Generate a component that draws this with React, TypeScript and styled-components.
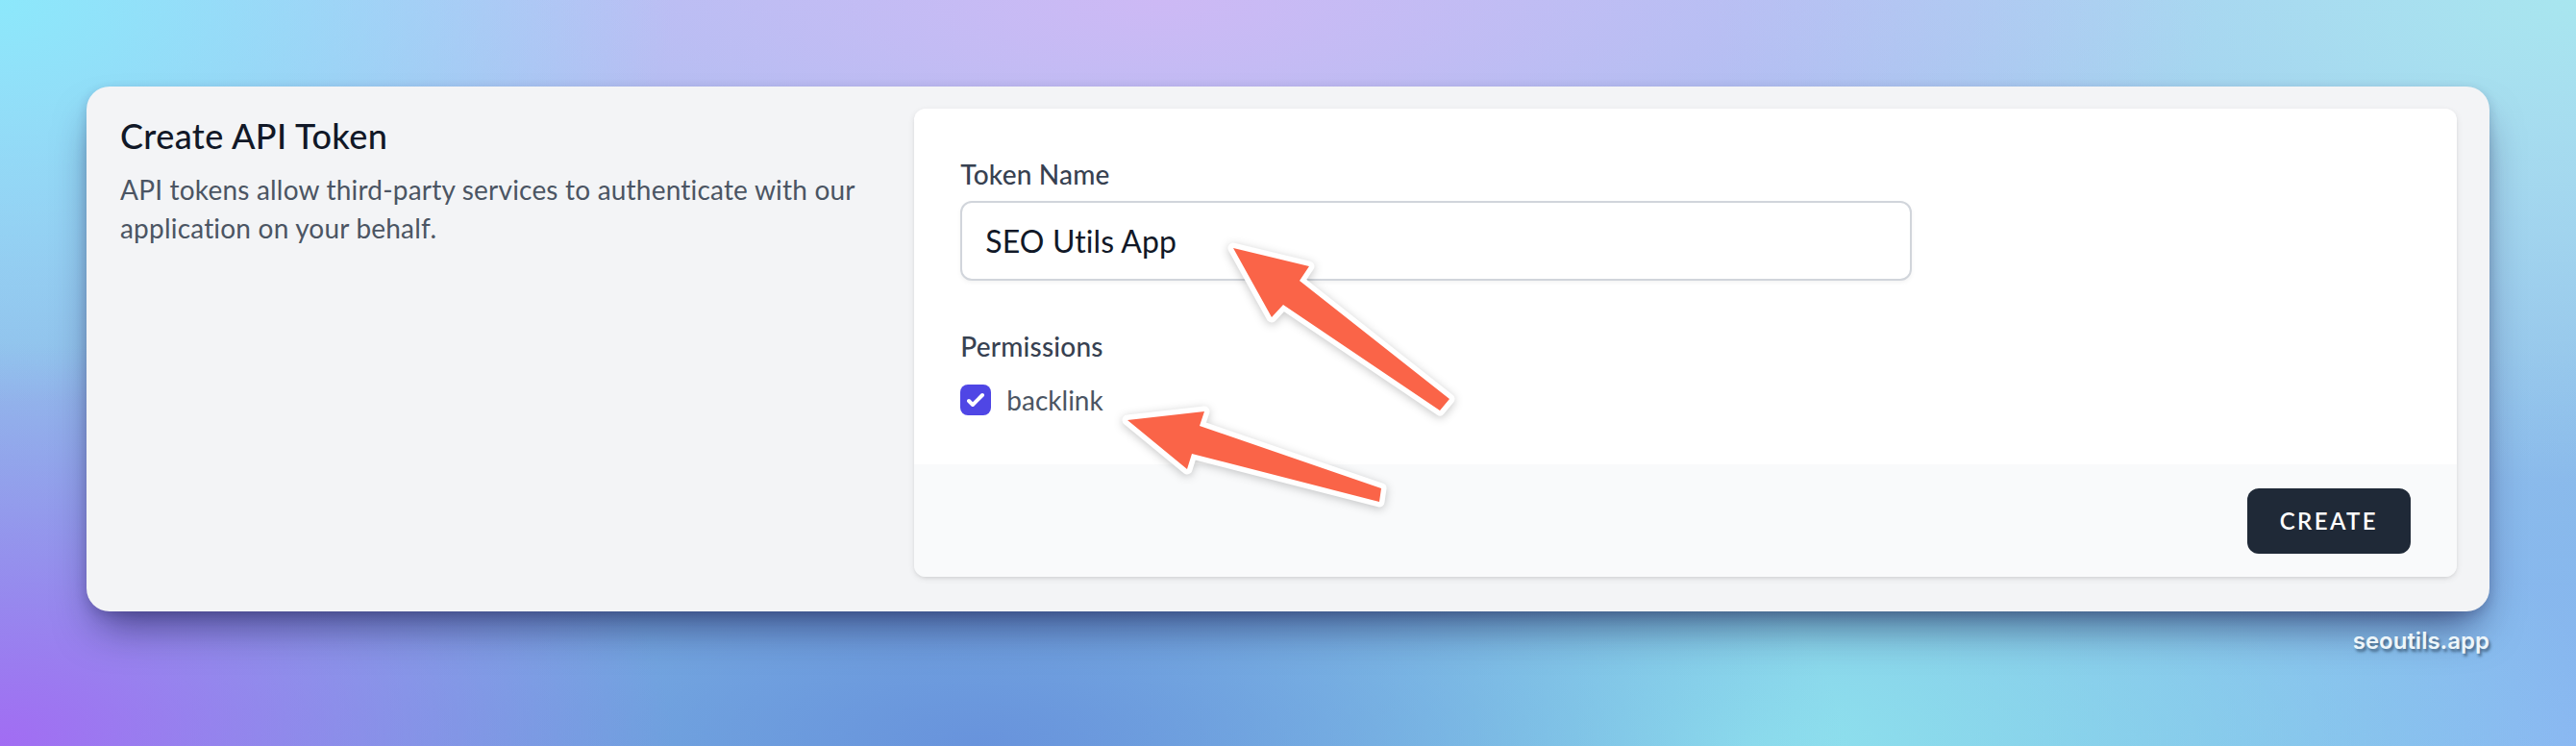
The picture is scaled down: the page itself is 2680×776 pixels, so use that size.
import React from "react";
import styled, { createGlobalStyle } from "styled-components";

const GlobalStyle = createGlobalStyle`
    html, body {
        margin: 0;
        padding: 0;
    }
    body {
        width: 2680px;
        height: 776px;
        overflow: hidden;
        font-family: "Lato", "Liberation Sans", sans-serif;
        background-color: #80a8e6;
        background-image:
            radial-gradient(ellipse 700px 420px at 0% 0%, #8ce8fb 0%, rgba(140, 232, 251, 0) 100%),
            radial-gradient(ellipse 1100px 380px at 45% 0%, #cdb9f5 0%, rgba(205, 185, 245, 0) 100%),
            radial-gradient(ellipse 900px 500px at 100% 0%, #a8e6ef 0%, rgba(168, 230, 239, 0) 100%),
            radial-gradient(ellipse 700px 420px at 0% 100%, #a26cf3 0%, rgba(162, 108, 243, 0) 100%),
            radial-gradient(ellipse 900px 380px at 38% 100%, #6893dc 0%, rgba(104, 147, 220, 0) 100%),
            radial-gradient(ellipse 900px 380px at 68% 100%, #8fe2ee 0%, rgba(143, 226, 238, 0) 100%),
            radial-gradient(ellipse 700px 420px at 100% 100%, #8ab6f2 0%, rgba(138, 182, 242, 0) 100%),
            linear-gradient(180deg, #a8c4f2 0%, #7ab8e2 100%);
    }
`;

const Page = styled.div`
    position: relative;
    width: 2680px;
    height: 776px;
    box-sizing: border-box;
    padding: 90px 90px 0 90px;
`;

const Card = styled.div`
    background: #f3f4f6;
    border-radius: 24px;
    padding: 23px 34px 36px 35px;
    box-shadow: 0 26px 44px -12px rgba(20, 20, 70, 0.6), 0 4px 12px rgba(20, 20, 70, 0.18);
`;

const Grid = styled.div`
    display: grid;
    grid-template-columns: repeat(3, 1fr);
    gap: 48px;
`;

const Intro = styled.div`
    grid-column: span 1;
`;

const Title = styled.h3`
    margin: 0;
    font-size: 36px;
    line-height: 56px;
    font-weight: 500;
    letter-spacing: 0.4px;
    color: #111827;
`;

const Description = styled.p`
    margin: 8px 0 0 0;
    font-size: 28px;
    line-height: 40px;
    letter-spacing: 0.2px;
    color: #4b5563;
`;

const Panel = styled.div`
    grid-column: span 2;
    display: flex;
    flex-direction: column;
    border-radius: 12px;
    box-shadow: 0 2px 6px rgba(0, 0, 0, 0.1), 0 2px 4px -2px rgba(0, 0, 0, 0.1);
`;

const PanelBody = styled.div`
    background: #ffffff;
    padding: 48px 48px 47px 48px;
    border-radius: 12px 12px 0 0;
    display: grid;
    grid-template-columns: repeat(6, 1fr);
    gap: 48px;
`;

const Field = styled.div<{ span: number }>`
    grid-column: span ${p => p.span};
`;

const Label = styled.label`
    display: block;
    font-size: 28px;
    line-height: 40px;
    font-weight: 500;
    letter-spacing: 0.2px;
    color: #374151;
`;

const Input = styled.input`
    display: block;
    width: 100%;
    box-sizing: border-box;
    margin-top: 8px;
    padding: 15px 24px;
    border: 2px solid #d1d5db;
    border-radius: 12px;
    font-family: inherit;
    font-size: 32px;
    line-height: 49px;
    letter-spacing: 0.1px;
    color: #111827;
    background: #ffffff;
    box-shadow: 0 2px 4px rgba(0, 0, 0, 0.05);
    outline: 0;
`;

const CheckList = styled.div`
    margin-top: 16px;
    display: grid;
    grid-template-columns: 1fr 1fr;
    gap: 32px;
`;

const CheckRow = styled.label`
    display: flex;
    align-items: center;
`;

const CheckBox = styled.span`
    width: 32px;
    height: 32px;
    border-radius: 8px;
    background: #4f46e5;
    display: flex;
    align-items: center;
    justify-content: center;
    svg {
        width: 32px;
        height: 32px;
    }
`;

const CheckText = styled.span`
    margin-left: 16px;
    font-size: 28px;
    line-height: 40px;
    color: #4b5563;
`;

const PanelFooter = styled.div`
    background: #f9fafb;
    padding: 25px 48px 24px 48px;
    border-radius: 0 0 12px 12px;
    display: flex;
    justify-content: flex-end;
    align-items: center;
`;

const Button = styled.button`
    background: #1f2937;
    border: 2px solid transparent;
    border-radius: 12px;
    padding: 16px 32px;
    font-family: inherit;
    font-size: 24px;
    line-height: 32px;
    font-weight: 600;
    letter-spacing: 0.1em;
    text-transform: uppercase;
    color: #ffffff;
`;

const Watermark = styled.div`
    margin-top: 17px;
    text-align: right;
    font-family: "Inter", "Liberation Sans", sans-serif;
    font-size: 24px;
    line-height: 28px;
    font-weight: 600;
    color: #eef6fa;
    text-shadow: 2px 3px 3px rgba(20, 40, 60, 0.55);
`;

const Overlay = styled.svg`
    position: absolute;
    left: 0;
    top: 0;
    width: 2680px;
    height: 776px;
    pointer-events: none;
    filter: drop-shadow(0 2px 5px rgba(0, 0, 0, 0.22));
`;

// arrow outlines, page coordinates: tip, barb, notch, tail, tail, notch, barb
const arrows = [
    "1283,258 1362,277 1352,292 1508,415 1498,427 1335,317 1323,330",
    "1173,437 1253,428 1248,443 1437,508 1435,522 1240,472 1235,488"
];

const App: React.FC = () => {
    return (
        <>
            <GlobalStyle />
            <Page>
                <Card>
                    <Grid>
                        <Intro>
                            <Title>Create API Token</Title>
                            <Description>
                                API tokens allow third-party services to authenticate with our application on your behalf.
                            </Description>
                        </Intro>
                        <Panel>
                            <PanelBody>
                                <Field span={4}>
                                    <Label>Token Name</Label>
                                    <Input defaultValue="SEO Utils App" />
                                </Field>
                                <Field span={6}>
                                    <Label>Permissions</Label>
                                    <CheckList>
                                        <CheckRow>
                                            <CheckBox>
                                                <svg viewBox="0 0 16 16" fill="#ffffff">
                                                    <path d="M12.207 4.793a1 1 0 010 1.414l-5 5a1 1 0 01-1.414 0l-2-2a1 1 0 011.414-1.414L6.5 9.086l4.293-4.293a1 1 0 011.414 0z" />
                                                </svg>
                                            </CheckBox>
                                            <CheckText>backlink</CheckText>
                                        </CheckRow>
                                    </CheckList>
                                </Field>
                            </PanelBody>
                            <PanelFooter>
                                <Button>Create</Button>
                            </PanelFooter>
                        </Panel>
                    </Grid>
                </Card>
                <Watermark>seoutils.app</Watermark>
                <Overlay viewBox="0 0 2680 776">
                    {arrows.map(points => (
                        <polygon
                            key={points}
                            points={points}
                            fill="#fa6448"
                            stroke="#ffffff"
                            strokeWidth={11}
                            strokeLinejoin="round"
                            paintOrder="stroke"
                        />
                    ))}
                </Overlay>
            </Page>
        </>
    );
};

export default App;
